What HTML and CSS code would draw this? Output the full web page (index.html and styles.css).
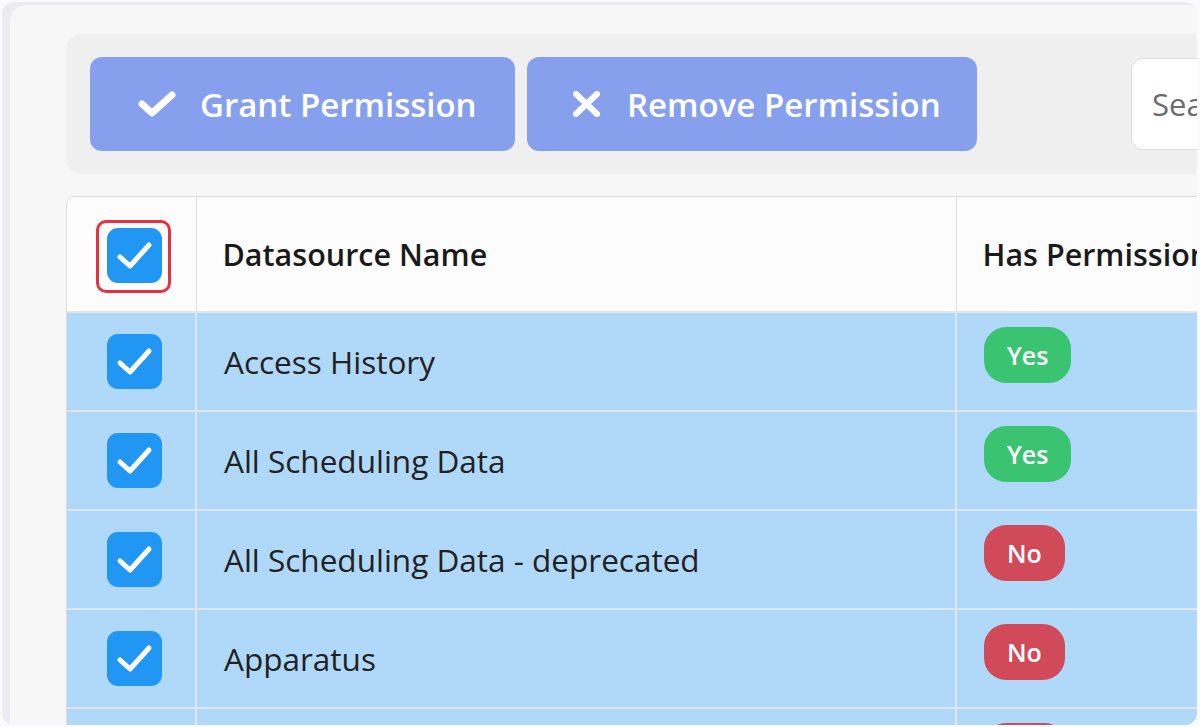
FILE: index.html
```html
<!DOCTYPE html>
<html lang="en">
<head>
<meta charset="utf-8">
<title>Datasource Permissions</title>
<link rel="stylesheet" href="styles.css">
</head>
<body>
<div class="frame">
  <div class="panel">
    <div class="toolbar">
      <button class="btn btn-grant">
        <svg class="btn-icon" width="38" height="26" viewBox="0 0 38 26"><path d="M4 13 L14 22 L34 4" fill="none" stroke="#fff" stroke-width="7" stroke-linecap="round" stroke-linejoin="round"/></svg>
        <span>Grant Permission</span>
      </button>
      <button class="btn btn-remove">
        <svg class="btn-icon" width="29" height="26" viewBox="0 0 29 26"><path d="M4 3 L25 23 M25 3 L4 23" fill="none" stroke="#fff" stroke-width="6" stroke-linecap="round"/></svg>
        <span>Remove Permission</span>
      </button>
      <div class="search"><span class="placeholder">Search</span></div>
    </div>

    <div class="table-wrap">
      <table class="grid">
        <thead>
          <tr>
            <th class="col-check">
              <span class="focus-ring">
                <svg class="cb" width="55" height="55" viewBox="0 0 55 55"><rect width="55" height="55" rx="11" fill="#2196f3"/><path d="M13 29 L23 38 L42 17" fill="none" stroke="#fff" stroke-width="5" stroke-linecap="round" stroke-linejoin="round"/></svg>
              </span>
            </th>
            <th class="col-name">Datasource Name</th>
            <th class="col-perm">Has Permission</th>
          </tr>
        </thead>
        <tbody>
          <tr>
            <td class="col-check"><svg class="cb" width="55" height="55" viewBox="0 0 55 55"><rect width="55" height="55" rx="11" fill="#2196f3"/><path d="M13 29 L23 38 L42 17" fill="none" stroke="#fff" stroke-width="5" stroke-linecap="round" stroke-linejoin="round"/></svg></td>
            <td class="col-name">Access History</td>
            <td class="col-perm"><span class="badge yes">Yes</span></td>
          </tr>
          <tr>
            <td class="col-check"><svg class="cb" width="55" height="55" viewBox="0 0 55 55"><rect width="55" height="55" rx="11" fill="#2196f3"/><path d="M13 29 L23 38 L42 17" fill="none" stroke="#fff" stroke-width="5" stroke-linecap="round" stroke-linejoin="round"/></svg></td>
            <td class="col-name">All Scheduling Data</td>
            <td class="col-perm"><span class="badge yes">Yes</span></td>
          </tr>
          <tr>
            <td class="col-check"><svg class="cb" width="55" height="55" viewBox="0 0 55 55"><rect width="55" height="55" rx="11" fill="#2196f3"/><path d="M13 29 L23 38 L42 17" fill="none" stroke="#fff" stroke-width="5" stroke-linecap="round" stroke-linejoin="round"/></svg></td>
            <td class="col-name">All Scheduling Data - deprecated</td>
            <td class="col-perm"><span class="badge no">No</span></td>
          </tr>
          <tr>
            <td class="col-check"><svg class="cb" width="55" height="55" viewBox="0 0 55 55"><rect width="55" height="55" rx="11" fill="#2196f3"/><path d="M13 29 L23 38 L42 17" fill="none" stroke="#fff" stroke-width="5" stroke-linecap="round" stroke-linejoin="round"/></svg></td>
            <td class="col-name">Apparatus</td>
            <td class="col-perm"><span class="badge no">No</span></td>
          </tr>
          <tr>
            <td class="col-check"></td>
            <td class="col-name"></td>
            <td class="col-perm"><span class="badge no badge-edge"></span></td>
          </tr>
        </tbody>
      </table>
    </div>
  </div>
</div>
</body>
</html>
```

FILE: styles.css
```css
* { box-sizing: border-box; }

html, body {
  margin: 0;
  padding: 0;
  width: 1200px;
  height: 727px;
  overflow: hidden;
  background: #fbfbfd;
  font-family: "Open Sans", "Noto Sans", "Liberation Sans", sans-serif;
}

.frame {
  margin: 2px 3px 0 2px;
  height: 723px;
  border-radius: 12px;
  background: #ebebf0;
  padding: 3px 0 0 8px;
  overflow: hidden;
}

.panel {
  width: 1500px;
  height: 760px;
  background: #f7f7f7;
  border-radius: 16px 0 0 0;
  padding: 29px 0 0 56px;
}

.toolbar {
  width: 1400px;
  height: 140px;
  background: #efefef;
  border-radius: 16px;
  padding: 0 24px;
  display: flex;
  align-items: center;
  gap: 12px;
}

.btn {
  height: 94px;
  border: none;
  border-radius: 12px;
  background: #86a0ee;
  color: #fff;
  font-family: inherit;
  font-size: 33px;
  font-weight: 600;
  display: flex;
  align-items: center;
  white-space: nowrap;
  flex: none;
}

.btn-grant {
  width: 425px;
  padding: 0 0 0 48px;
  gap: 24px;
}

.btn-remove {
  width: 450px;
  padding: 0 0 0 45px;
  gap: 26px;
}

.btn-icon { display: block; flex: none; }

.search {
  margin-left: 142px;
  width: 300px;
  height: 92px;
  background: #fff;
  border: 1px solid #dcdcdc;
  border-radius: 12px;
  display: flex;
  align-items: center;
  padding-left: 20px;
  flex: none;
}

.placeholder {
  color: #6b6b6b;
  font-size: 31px;
}

.table-wrap {
  margin-top: 22px;
  width: 1200px;
  border: 1px solid #dcdcdc;
  border-radius: 8px;
  overflow: hidden;
}

.grid {
  width: 100%;
  border-collapse: collapse;
  table-layout: fixed;
}

.grid .col-check { width: 129px; }
.grid .col-name { width: 760px; }

.grid th {
  height: 115px;
  background: #fcfcfc;
  font-size: 30.5px;
  font-weight: 600;
  color: #1a1a1a;
  text-align: left;
  padding: 0 0 0 26px;
  border-left: 1px solid #e0e0e0;
}

.grid th.col-check {
  border-left: none;
  padding: 4px 0 0 29px;
}

.grid td {
  height: 99px;
  background: #b0d8f8;
  font-size: 31.5px;
  color: #222;
  padding: 0 0 0 27px;
  border-top: 2px solid #dfe6ec;
  border-left: 2px solid #dfe6ec;
}

.grid td.col-check {
  border-left: none;
  padding: 0 0 0 40px;
}

.grid td.col-perm {
  vertical-align: top;
  padding-top: 14px;
}

.cb { display: block; }

.focus-ring {
  display: inline-block;
  padding: 5px 6px 7px 8px;
  border: 3px solid #e5323f;
  border-radius: 10px;
  vertical-align: middle;
}

.badge {
  display: inline-block;
  height: 56px;
  line-height: 56px;
  padding: 0 23px;
  border-radius: 22px;
  color: #fff;
  font-size: 25px;
  font-weight: 600;
}

.badge.yes { background: #3ac472; }
.badge.no { background: #d04a5a; }
.badge-edge { width: 83px; }
```
